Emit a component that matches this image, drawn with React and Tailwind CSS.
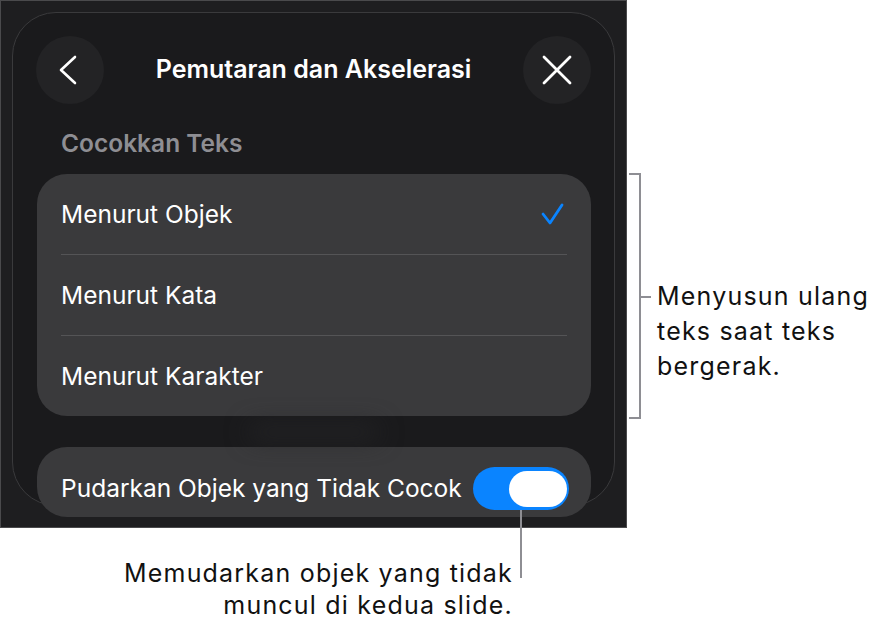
const options = ['Menurut Objek', 'Menurut Kata', 'Menurut Karakter']

function RoundButton({ children }) {
  return (
    <button type="button" className="flex size-[68px] items-center justify-center rounded-full bg-[#232325]">
      {children}
    </button>
  )
}

function Toggle() {
  return (
    <div className="flex h-[43px] w-[96px] items-center justify-end rounded-full bg-[#0a84ff] pr-[2px]">
      <div className="h-[36px] w-[58px] rounded-full bg-white" />
    </div>
  )
}

function Sheet() {
  return (
    <div className="h-[528px] w-[627px] overflow-hidden border border-[#4a4a4c] bg-[#1e1e20] px-[11px] pt-[11px]">
      <div className="h-[494px] rounded-[44px] border border-[#3a3a3c] bg-[#1a1a1c] px-[23px] pt-[23px] font-['Inter',sans-serif] text-white">
        <div className="flex h-[68px] items-center justify-between">
          <RoundButton>
            <svg width="68" height="68" viewBox="0 0 68 68" fill="none" stroke="white" strokeWidth="2.6" strokeLinecap="round" strokeLinejoin="round">
              <path d="M39 21 L25 34 L39 47" />
            </svg>
          </RoundButton>
          <h1 className="text-[25px] font-semibold">Pemutaran dan Akselerasi</h1>
          <RoundButton>
            <svg width="68" height="68" viewBox="0 0 68 68" fill="none" stroke="white" strokeWidth="2.8" strokeLinecap="round">
              <path d="M21 21 L47 47 M47 21 L21 47" />
            </svg>
          </RoundButton>
        </div>

        <p className="mt-[24px] pl-[25px] text-[24.5px] leading-[30px] font-semibold text-[#8e8e93]">Cocokkan Teks</p>

        <div className="mt-[16px] ml-px rounded-[30px] bg-[#3a3a3c]">
          {options.map((label, i) => (
            <div key={label}>
              {i > 0 && <div className="mx-[24px] h-px bg-[#545456]" />}
              <div className="flex h-[80px] items-center justify-between pr-[26px] pl-[24px]">
                <span className="text-[24.5px]">{label}</span>
                {i === 0 && (
                  <svg width="24" height="24" viewBox="0 0 24 24" fill="none" stroke="#0a84ff" strokeWidth="2.8" strokeLinecap="round" strokeLinejoin="round">
                    <path d="M2 12 L9 21 L21 3" />
                  </svg>
                )}
              </div>
            </div>
          ))}
        </div>

        <div className="flex h-[31px] items-center justify-center">
          <div className="h-[12px] w-[130px] rounded-full bg-[#262628] blur-md" />
        </div>

        <div className="ml-px h-[70px] rounded-[30px] bg-[#3a3a3c] pt-[20px] pr-[22px] pl-[24px]">
          <div className="flex h-[43px] items-center justify-between">
            <span className="text-[24.5px]">Pudarkan Objek yang Tidak Cocok</span>
            <Toggle />
          </div>
        </div>
      </div>
    </div>
  )
}

export default function App() {
  return (
    <div className="relative flex h-[625px] w-[880px] items-start bg-white font-['Inter',sans-serif] text-[#111]">
      <div className="w-[627px]">
        <Sheet />
        <p className="mt-[29px] pr-[114px] text-right text-[25px] leading-[32px] tracking-[1.2px]">
          Memudarkan objek yang tidak
          <br />
          muncul di kedua slide.
        </p>
      </div>

      {/* bracket around the list */}
      <div className="relative mt-[173px] ml-[2px] h-[246px] w-[12px] border-y-2 border-r-2 border-[#8e8e93]">
        <div className="absolute top-[121px] left-full h-[2px] w-[12px] bg-[#8e8e93]" />
      </div>
      <p className="mt-[279px] ml-[16px] text-[25px] leading-[35px] tracking-[1.2px]">
        Menyusun ulang
        <br />
        teks saat teks
        <br />
        bergerak.
      </p>

      {/* leader from the toggle */}
      <div className="absolute top-[510px] left-[520px] h-[68px] w-[2px] bg-[#8e8e93]" />
    </div>
  )
}
